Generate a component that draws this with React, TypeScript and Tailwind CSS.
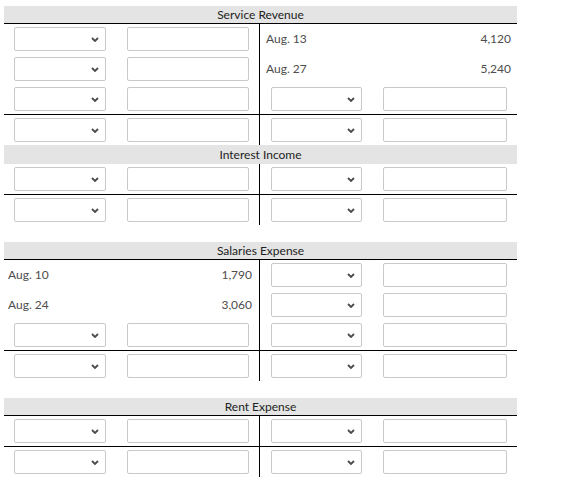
// T-account worksheet
import React from 'react';

type Side = { date: string; amount: string } | null;

type Row = { left: Side; right: Side; line?: boolean };

type Account = { title: string; rows: Row[]; gap: string; headH: string; topLine: boolean };

const accounts: Account[] = [
  {
    title: 'Service Revenue',
    gap: 'mt-[6px]',
    headH: 'h-[17px]',
    topLine: true,
    rows: [
      { left: null, right: { date: 'Aug. 13', amount: '4,120' } },
      { left: null, right: { date: 'Aug. 27', amount: '5,240' } },
      { left: null, right: null },
      { left: null, right: null, line: true },
    ],
  },
  {
    title: 'Interest Income',
    gap: 'mt-0',
    headH: 'h-[19px]',
    topLine: false,
    rows: [
      { left: null, right: null },
      { left: null, right: null, line: true },
    ],
  },
  {
    title: 'Salaries Expense',
    gap: 'mt-[17px]',
    headH: 'h-[17px]',
    topLine: true,
    rows: [
      { left: { date: 'Aug. 10', amount: '1,790' }, right: null },
      { left: { date: 'Aug. 24', amount: '3,060' }, right: null },
      { left: null, right: null },
      { left: null, right: null, line: true },
    ],
  },
  {
    title: 'Rent Expense',
    gap: 'mt-[17px]',
    headH: 'h-[17px]',
    topLine: true,
    rows: [
      { left: null, right: null },
      { left: null, right: null, line: true },
    ],
  },
];

function Dropdown({ w }: { w: string }) {
  return (
    <div className={`flex h-[24px] ${w} items-center justify-end rounded-[2px] border border-[#c9c9c9] bg-white pr-[6px]`}>
      <svg width="8" height="5" viewBox="0 0 8 5">
        <path d="M1 1l3 3 3-3" fill="none" stroke="#4a4a4a" strokeWidth="1.8" />
      </svg>
    </div>
  );
}

function Field({ w }: { w: string }) {
  return <div className={`h-[24px] ${w} rounded-[2px] border border-[#c9c9c9] bg-white`} />;
}

export default function App() {
  return (
    <div className="min-h-screen bg-white pl-[4px] font-['Lato','Liberation_Sans',sans-serif] text-[12px]">
      {accounts.map((acc) => (
        <div key={acc.title} className={`w-[513px] ${acc.gap}`}>
          <div className={`flex ${acc.headH} items-center justify-center bg-[#e4e4e4] text-[#222]`}>
            {acc.title}
          </div>
          <div className={acc.topLine ? 'border-t border-black' : ''}>
            {acc.rows.map((r, i) => (
              <div
                key={i}
                className={`flex ${r.line ? 'h-[31px] border-t border-black' : 'h-[30px]'}`}
              >
                {/* debit side */}
                <div className="flex w-[256px] items-center border-r border-black">
                  {r.left ? (
                    <div className="flex w-full justify-between pl-[4px] pr-[7px] text-[#4d4d4d]">
                      <span>{r.left.date}</span>
                      <span>{r.left.amount}</span>
                    </div>
                  ) : (
                    <div className="flex items-center gap-[21px] pl-[10px]">
                      <Dropdown w="w-[92px]" />
                      <Field w="w-[122px]" />
                    </div>
                  )}
                </div>
                {/* credit side */}
                <div className="flex flex-1 items-center">
                  {r.right ? (
                    <div className="flex w-full justify-between pl-[6px] pr-[6px] text-[#4d4d4d]">
                      <span>{r.right.date}</span>
                      <span>{r.right.amount}</span>
                    </div>
                  ) : (
                    <div className="flex items-center gap-[21px] pl-[11px]">
                      <Dropdown w="w-[91px]" />
                      <Field w="w-[124px]" />
                    </div>
                  )}
                </div>
              </div>
            ))}
          </div>
        </div>
      ))}
    </div>
  );
}
